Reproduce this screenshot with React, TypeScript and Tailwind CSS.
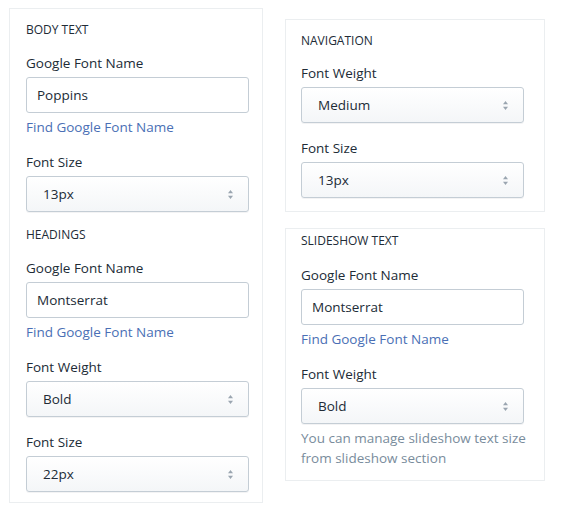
import React from 'react';

const font = { fontFamily: '"Open Sans", "Noto Sans", sans-serif' };

function Title({ children }: { children: React.ReactNode }) {
  return (
    <div className="text-[12px] leading-[16px] font-medium uppercase text-[#212b36]">
      {children}
    </div>
  );
}

function Label({ children, className = '' }: { children: React.ReactNode; className?: string }) {
  return <div className={`text-[13.5px] leading-[20px] text-[#212b36] ${className}`}>{children}</div>;
}

function TextInput({ value }: { value: string }) {
  return (
    <div className="mt-[4px] h-[36px] w-[223px] rounded-[3px] border border-[#c4cdd5] bg-white pl-[10px] flex items-center text-[13.5px] text-[#212b36]">
      {value}
    </div>
  );
}

function Select({ value }: { value: string }) {
  return (
    <div className="mt-[4px] h-[36px] w-[223px] rounded-[3px] border border-[#c4cdd5] bg-gradient-to-b from-white to-[#f4f6f8] pl-[16px] pr-[14px] flex items-center justify-between text-[13.5px] text-[#212b36] shadow-[0_1px_0_rgba(22,29,37,0.05)]">
      <span>{value}</span>
      <svg width="7" height="11" viewBox="0 0 7 11">
        <path d="M3.5 1 L6 4.2 H1 Z" fill="#9aa5b0" />
        <path d="M3.5 10 L6 6.8 H1 Z" fill="#9aa5b0" />
      </svg>
    </div>
  );
}

function FindLink() {
  return <div className="mt-[4px] text-[13.5px] leading-[20px] text-[#4a6fb5]">Find Google Font Name</div>;
}

export default function App() {
  return (
    <div className="w-[568px] h-[512px] bg-white flex items-start" style={font}>
      {/* left column */}
      <div className="ml-[9px] mt-[8px] w-[254px] h-[495px] border border-[#ebeef0] pl-[16px] pt-[13px]">
        <Title>Body Text</Title>
        <Label className="mt-[15px]">Google Font Name</Label>
        <TextInput value="Poppins" />
        <FindLink />
        <Label className="mt-[15px]">Font Size</Label>
        <Select value="13px" />
        <div className="mt-[15px]">
          <Title>Headings</Title>
        </div>
        <Label className="mt-[15px]">Google Font Name</Label>
        <TextInput value="Montserrat" />
        <FindLink />
        <Label className="mt-[15px]">Font Weight</Label>
        <Select value="Bold" />
        <Label className="mt-[15px]">Font Size</Label>
        <Select value="22px" />
      </div>

      {/* right column */}
      <div className="ml-[22px] mt-[19px] w-[260px] flex flex-col">
        <div className="h-[193px] border border-[#ebeef0] pl-[15px] pt-[13px]">
          <Title>Navigation</Title>
          <Label className="mt-[14px]">Font Weight</Label>
          <Select value="Medium" />
          <Label className="mt-[15px]">Font Size</Label>
          <Select value="13px" />
        </div>
        <div className="mt-[16px] h-[253px] border border-[#ebeef0] pl-[15px] pt-[4px]">
          <Title>Slideshow Text</Title>
          <Label className="mt-[16px]">Google Font Name</Label>
          <TextInput value="Montserrat" />
          <FindLink />
          <Label className="mt-[15px]">Font Weight</Label>
          <Select value="Bold" />
          <div className="mt-[4px] w-[230px] text-[13.5px] leading-[20px] text-[#798c9c]">
            You can manage slideshow text size from slideshow section
          </div>
        </div>
      </div>
    </div>
  );
}
